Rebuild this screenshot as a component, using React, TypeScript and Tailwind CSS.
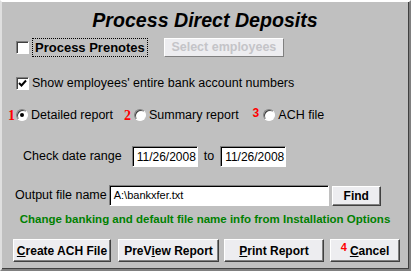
import type { ReactNode } from 'react';

const font = { fontFamily: '"Liberation Sans", Arial, sans-serif' };
const serif = { fontFamily: '"Liberation Serif", serif' };

function Check({ checked }: { checked?: boolean }) {
  return (
    <span className="flex h-[13px] w-[13px] items-center justify-center border border-t-[#808080] border-l-[#808080] border-r-white border-b-white bg-white shadow-[inset_1px_1px_0_#404040]">
      {checked && (
        <svg width="9" height="9" viewBox="0 0 9 9">
          <path d="M1 4 L3.5 6.5 L8 1.5" stroke="#000" strokeWidth="2" fill="none" />
        </svg>
      )}
    </span>
  );
}

function Radio({ checked }: { checked?: boolean }) {
  return (
    <span className="flex h-[12px] w-[12px] items-center justify-center rounded-full border border-t-[#808080] border-l-[#808080] border-r-white border-b-white bg-white shadow-[inset_1px_1px_0_#404040]">
      {checked && <span className="h-[4px] w-[4px] rounded-full bg-black" />}
    </span>
  );
}

function Btn({ children, className = '' }: { children: ReactNode; className?: string }) {
  return (
    <div
      className={`flex items-center justify-center whitespace-nowrap border border-t-white border-l-white border-r-[#404040] border-b-[#404040] bg-[#ededf0] text-[12px] font-bold text-black shadow-[inset_-1px_-1px_0_#808080] ${className}`}
    >
      {children}
    </div>
  );
}

function Field({ value, className = '' }: { value: string; className?: string }) {
  return (
    <div
      className={`flex items-center border border-t-[#808080] border-l-[#808080] border-r-white border-b-white bg-white pl-[4px] shadow-[inset_1px_1px_0_#000] ${className}`}
    >
      {value}
    </div>
  );
}

export default function App() {
  return (
    <div
      className="h-[271px] w-[411px] border-2 border-t-white border-l-[#dfdfdf] border-r-[#808080] border-b-[#808080] bg-[#c0c0c0] text-black"
      style={font}
    >
      <div className="h-full w-full border-r border-b border-[#404040]">
        <div className="pt-[6px] text-center text-[19.6px] font-bold italic leading-[24px]">
          Process Direct Deposits
        </div>

        <div className="mt-[6px] flex h-[19px] items-center pl-[14px]">
          <Check />
          <span className="ml-[3px] flex h-[19px] items-center border border-dotted border-black px-[2px] text-[13px] font-bold">
            Process Prenotes
          </span>
          <div className="ml-[16px] flex h-[19px] w-[120px] items-center justify-center border border-t-white border-l-white border-r-[#808080] border-b-[#808080] bg-[#ededf0] text-[12.5px] font-bold text-[#c4c4c8]">
            Select employees
          </div>
        </div>

        <div className="mt-[18px] flex h-[16px] items-center pl-[14px] text-[12.5px]">
          <Check checked />
          <span className="ml-[3px]">Show employees' entire bank account numbers</span>
        </div>

        <div className="mt-[16px] flex h-[16px] items-center pl-[6px] text-[12.5px]">
          <span className="mr-[1px] text-[14px] font-bold text-[#ff0000]" style={serif}>1</span>
          <Radio checked />
          <span className="ml-[3px]">Detailed report</span>
          <span className="ml-[11px] mr-[3px] text-[14px] font-bold text-[#ff0000]" style={serif}>2</span>
          <Radio />
          <span className="ml-[3px]">Summary report</span>
          <span className="ml-[14px] mr-[4px] self-start text-[12px] font-bold leading-[12px] text-[#ff0000]">3</span>
          <Radio />
          <span className="ml-[3px]">ACH file</span>
        </div>

        <div className="mt-[23px] flex h-[21px] items-center pl-[21px] text-[12.5px]">
          <span>Check date range</span>
          <Field value="11/26/2008" className="ml-[10px] h-[21px] w-[66px] text-[12px]" />
          <span className="ml-[6px]">to</span>
          <Field value="11/26/2008" className="ml-[6px] h-[21px] w-[66px] text-[12px]" />
        </div>

        <div className="mt-[18px] flex h-[21px] items-center pl-[13px] text-[12.5px]">
          <span>Output file name</span>
          <Field value="A:\bankxfer.txt" className="ml-[2px] h-[21px] w-[220px] text-[11px]" />
          <Btn className="ml-[3px] h-[20px] w-[49px]">Find</Btn>
        </div>

        <div className="mt-[5px] h-[17px] whitespace-nowrap text-center text-[11.5px] font-bold leading-[17px] text-[#008000]">
          Change banking and default file name info from Installation Options
        </div>

        <div className="mt-[11px] flex h-[23px] items-center pl-[11px]">
          <Btn className="h-[23px] w-[98px]">
            <span className="underline">C</span>reate ACH File
          </Btn>
          <Btn className="ml-[7px] h-[23px] w-[101px]">
            PreV<span className="underline">i</span>ew Report
          </Btn>
          <Btn className="ml-[5px] h-[23px] w-[100px]">
            <span className="underline">P</span>rint Report
          </Btn>
          <Btn className="ml-[6px] h-[23px] w-[70px]">
            <span className="mr-[3px] self-start pt-[2px] text-[11px] leading-[11px] text-[#ff0000]">4</span>
            <span className="underline">C</span>ancel
          </Btn>
        </div>
      </div>
    </div>
  );
}
